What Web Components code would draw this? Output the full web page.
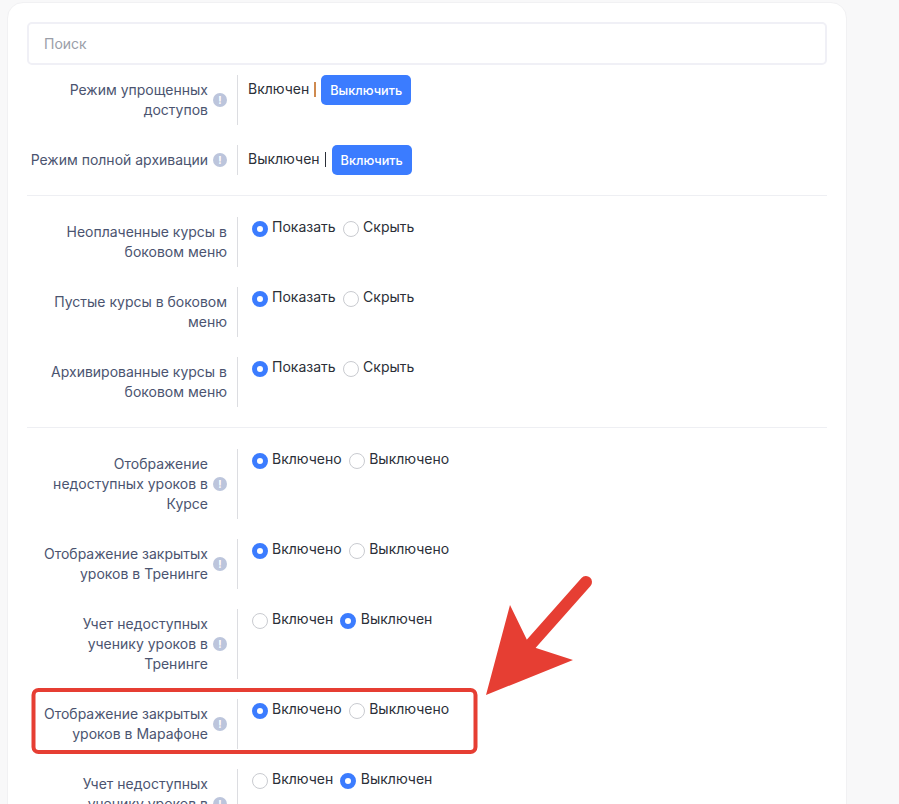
<!DOCTYPE html>
<html lang="ru">
<head>
<meta charset="utf-8">
<title>Настройки</title>
<style>
  html, body { margin: 0; height: 804px; overflow: hidden; background: #f8f8f9; }
  body { font-family: Inter, "Liberation Sans", sans-serif; font-size: 14px; color: #2b2f38; }
</style>
</head>
<body>
<settings-page>
  <settings-search>Поиск</settings-search>

  <settings-row info>
    <span slot="label">Режим упрощенных доступов</span>
    <status-toggle bar="#cf8a4f" action="Выключить">Включен</status-toggle>
  </settings-row>
  <settings-row info>
    <span slot="label">Режим полной архивации</span>
    <status-toggle bar="#2b2f38" action="Включить">Выключен</status-toggle>
  </settings-row>

  <settings-sep></settings-sep>

  <settings-row>
    <span slot="label">Неоплаченные курсы в боковом меню</span>
    <radio-option checked>Показать</radio-option><radio-option>Скрыть</radio-option>
  </settings-row>
  <settings-row>
    <span slot="label">Пустые курсы в боковом меню</span>
    <radio-option checked>Показать</radio-option><radio-option>Скрыть</radio-option>
  </settings-row>
  <settings-row>
    <span slot="label">Архивированные курсы в боковом меню</span>
    <radio-option checked>Показать</radio-option><radio-option>Скрыть</radio-option>
  </settings-row>

  <settings-sep></settings-sep>

  <settings-row info>
    <span slot="label">Отображение недоступных уроков в Курсе</span>
    <radio-option checked>Включено</radio-option><radio-option>Выключено</radio-option>
  </settings-row>
  <settings-row info>
    <span slot="label">Отображение закрытых уроков в Тренинге</span>
    <radio-option checked>Включено</radio-option><radio-option>Выключено</radio-option>
  </settings-row>
  <settings-row info>
    <span slot="label">Учет недоступных ученику уроков в Тренинге</span>
    <radio-option>Включен</radio-option><radio-option checked>Выключен</radio-option>
  </settings-row>
  <settings-row info>
    <span slot="label">Отображение закрытых уроков в Марафоне</span>
    <radio-option checked>Включено</radio-option><radio-option>Выключено</radio-option>
  </settings-row>
  <settings-row info>
    <span slot="label">Учет недоступных ученику уроков в Марафоне</span>
    <radio-option>Включен</radio-option><radio-option checked>Выключен</radio-option>
  </settings-row>
</settings-page>
<red-callout></red-callout>

<script>
// Card that holds all the settings
class SettingsPage extends HTMLElement {
  constructor() {
    super();
    this.attachShadow({ mode: 'open' });
    this.shadowRoot.innerHTML = `
      <style>
        :host {
          display: block;
          box-sizing: border-box;
          width: 840px;
          height: 900px;
          margin: 2px 0 0 7px;
          padding: 19px 19px 0;
          background: #fff;
          border: 1px solid #f1f1f3;
          border-radius: 16px;
        }
      </style>
      <slot></slot>
    `;
  }
}

class SettingsSearch extends HTMLElement {
  constructor() {
    super();
    this.attachShadow({ mode: 'open' });
    this.shadowRoot.innerHTML = `
      <style>
        :host {
          display: flex;
          align-items: center;
          box-sizing: border-box;
          height: 43px;
          margin-bottom: 10px;
          padding: 0 15px;
          border: 2px solid #f0f0f6;
          border-radius: 5px;
          color: #9a9ea8;
          font-size: 14px;
        }
      </style>
      <slot></slot>
    `;
  }
}

class SettingsSep extends HTMLElement {
  constructor() {
    super();
    this.attachShadow({ mode: 'open' });
    this.shadowRoot.innerHTML = `
      <style>
        :host {
          display: block;
          height: 1px;
          margin-bottom: 21px;
          background: #eeeff3;
        }
      </style>
    `;
  }
}

// Label on the left, divider, controls on the right
class SettingsRow extends HTMLElement {
  constructor() {
    super();
    this.attachShadow({ mode: 'open' });
    const icon = this.hasAttribute('info') ? '<span class="info">!</span>' : '';
    this.shadowRoot.innerHTML = `
      <style>
        :host {
          display: flex;
          margin-bottom: 20px;
        }
        .label {
          box-sizing: border-box;
          flex: 0 0 211px;
          display: flex;
          align-items: center;
          justify-content: flex-end;
          gap: 5px;
          padding: 5px 10px 5px 0;
          border-right: 1px solid #dcdde1;
          color: #4b5470;
          line-height: 20px;
          text-align: right;
        }
        .info {
          flex: none;
          width: 14px;
          height: 14px;
          border-radius: 50%;
          background: #bcc5dc;
          color: #fff;
          font-size: 10px;
          font-weight: 700;
          line-height: 14px;
          text-align: center;
        }
        .value {
          display: flex;
          align-items: flex-start;
          flex: 1;
          padding-left: 10px;
          line-height: 20px;
        }
      </style>
      <div class="label"><div><slot name="label"></slot></div>${icon}</div>
      <div class="value"><slot></slot></div>
    `;
  }
}

class RadioOption extends HTMLElement {
  constructor() {
    super();
    this.attachShadow({ mode: 'open' });
    this.shadowRoot.innerHTML = `
      <style>
        :host {
          display: inline-flex;
          align-items: flex-start;
          gap: 4px;
          margin-left: 4px;
          margin-right: 3px;
          line-height: 20px;
        }
        :host(:last-child) {
          gap: 4.5px;
        }
        .dot {
          box-sizing: border-box;
          width: 16px;
          height: 16px;
          margin-top: 4px;
          border: 1px solid #c9cbd0;
          border-radius: 50%;
          background: #fff;
        }
        :host([checked]) .dot {
          border: 5px solid #3b7cff;
        }
      </style>
      <span class="dot"></span><span><slot></slot></span>
    `;
  }
}

// Current state, a thin bar and a button that flips it
class StatusToggle extends HTMLElement {
  constructor() {
    super();
    this.attachShadow({ mode: 'open' });
    const bar = this.getAttribute('bar');
    const action = this.getAttribute('action');
    this.shadowRoot.innerHTML = `
      <style>
        :host {
          display: flex;
          align-items: flex-start;
          line-height: 20px;
        }
        .state { margin-top: 4px; }
        .bar {
          width: 1.5px;
          height: 15px;
          margin: 7px 5.5px 0 5px;
          background: ${bar};
        }
        button {
          height: 30px;
          padding: 0 9px;
          border: 0;
          border-radius: 5px;
          background: #3b7cff;
          color: #fff;
          font: 500 12.7px Inter, "Liberation Sans", sans-serif;
        }
      </style>
      <span class="state"><slot></slot></span><span class="bar"></span><button>${action}</button>
    `;
  }
}

// Hand-drawn annotation lying over the page
class RedCallout extends HTMLElement {
  constructor() {
    super();
    this.attachShadow({ mode: 'open' });
    this.shadowRoot.innerHTML = `
      <style>
        :host {
          position: absolute;
          left: 0;
          top: 0;
          width: 899px;
          height: 804px;
          pointer-events: none;
        }
        svg { display: block; }
      </style>
      <svg width="899" height="804" viewBox="0 0 899 804" fill="none">
        <rect x="33.5" y="690" width="442" height="62" rx="5" stroke="#e63e33" stroke-width="4"/>
        <path d="M586 582 531 644" stroke="#e63e33" stroke-width="12" stroke-linecap="round"/>
        <path d="M486 695 510 605 527 640 536 648 573 660Z" fill="#e63e33"/>
      </svg>
    `;
  }
}

customElements.define('settings-page', SettingsPage);
customElements.define('settings-search', SettingsSearch);
customElements.define('settings-sep', SettingsSep);
customElements.define('settings-row', SettingsRow);
customElements.define('radio-option', RadioOption);
customElements.define('status-toggle', StatusToggle);
customElements.define('red-callout', RedCallout);
</script>
</body>
</html>
